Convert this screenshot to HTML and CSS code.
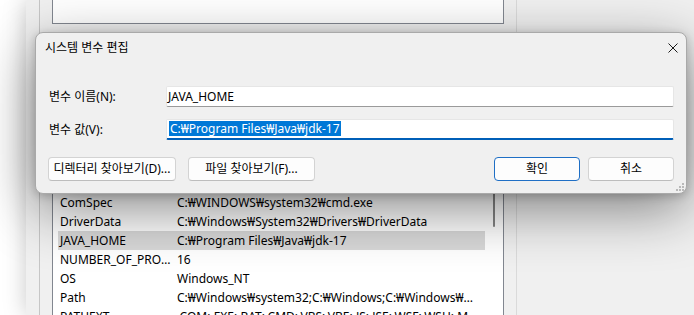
FILE: index.html
```html
<!DOCTYPE html>
<html lang="ko">
<head>
  <meta charset="UTF-8" />
  <meta name="viewport" content="width=device-width, initial-scale=1.0"/>
  <title>시스템 변수 편집</title>
  <link rel="stylesheet" href="styles.css">
</head>
<body>
  <!-- 뒤쪽 환경 변수 창 -->
  <div class="desk">
    <div class="pane">
      <div class="list list-user"></div>
      <div class="list list-sys">
        <div class="rows">
          <div class="row head"></div>
          <div class="row"><span class="c1">ComSpec</span><span class="c2">C:₩WINDOWS₩system32₩cmd.exe</span></div>
          <div class="row"><span class="c1">DriverData</span><span class="c2">C:₩Windows₩System32₩Drivers₩DriverData</span></div>
          <div class="row selected"><span class="c1">JAVA_HOME</span><span class="c2">C:₩Program Files₩Java₩jdk-17</span></div>
          <div class="row"><span class="c1">NUMBER_OF_PROCESSORS</span><span class="c2">16</span></div>
          <div class="row"><span class="c1">OS</span><span class="c2">Windows_NT</span></div>
          <div class="row"><span class="c1">Path</span><span class="c2">C:₩Windows₩system32;C:₩Windows;C:₩Windows₩System32₩Wbem;C:₩Windows₩System32₩WindowsPowerShell₩v1.0₩</span></div>
          <div class="row"><span class="c1">PATHEXT</span><span class="c2">.COM;.EXE;.BAT;.CMD;.VBS;.VBE;.JS;.JSE;.WSF;.WSH;.MSC</span></div>
        </div>
        <div class="scroll"><div class="thumb"></div></div>
      </div>
    </div>
  </div>

  <!-- 시스템 변수 편집 대화상자 -->
  <div class="dialog">
    <div class="titlebar">
      <span class="title">시스템 변수 편집</span>
      <svg class="close" width="10" height="10" viewBox="0 0 10 10">
        <path d="M0.5 0.5 L9.5 9.5 M9.5 0.5 L0.5 9.5" stroke="#1b1b1b" stroke-width="1" fill="none"/>
      </svg>
    </div>
    <div class="body">
      <div class="field">
        <label>변수 이름(N):</label>
        <div class="input">JAVA_HOME</div>
      </div>
      <div class="field">
        <label>변수 값(V):</label>
        <div class="input focus"><span class="sel">C:₩Program Files₩Java₩jdk-17</span></div>
      </div>
      <div class="buttons">
        <div class="group">
          <button class="wide">디렉터리 찾아보기(D)...</button>
          <button class="wide2">파일 찾아보기(F)...</button>
        </div>
        <div class="group right">
          <button class="small default">확인</button>
          <button class="small">취소</button>
        </div>
      </div>
    </div>
    <svg class="grip" width="10" height="10" viewBox="0 0 10 10" fill="#b9b9b9">
      <rect x="7" y="1" width="2" height="2"/>
      <rect x="4" y="4" width="2" height="2"/><rect x="7" y="4" width="2" height="2"/>
      <rect x="1" y="7" width="2" height="2"/><rect x="4" y="7" width="2" height="2"/><rect x="7" y="7" width="2" height="2"/>
    </svg>
  </div>
</body>
</html>
```

FILE: styles.css
```css
body {
  margin: 0;
  width: 694px;
  height: 315px;
  overflow: hidden;
  position: relative;
  background: #fff;
  font: 12px/1 "Noto Sans", "Noto Sans CJK KR", sans-serif;
  color: #000;
}

/* parent window */
.desk { margin-left: 26px; height: 315px; overflow: hidden; padding-left: 13px; background: #f0f0f0; box-shadow: 0 0 22px rgba(0,0,0,.22); }
.pane { width: 452px; height: 315px; padding: 0 12px; border-left: 1px solid #c6c6c6; border-right: 1px solid #dadada; }

.list { width: 452px; box-sizing: border-box; background: #fff; border: 1px solid #828790; }
.list-user { height: 24px; border-top: none; }
.list-sys { margin-top: 144px; height: 200px; display: flex; }

.rows { flex: 1; padding: 0 4px 0 5px; min-width: 0; }
.row { display: flex; height: 19px; line-height: 19px; white-space: nowrap; }
.row.head { height: 24px; }
.row.selected { background: #d9d9d9; }
.row span { overflow: hidden; text-overflow: ellipsis; }
.c1 { width: 117px; flex: none; box-sizing: border-box; padding: 0 3px 0 2px; }
.c2 { flex: 1; padding: 0 6px 0 2px; }

.scroll { width: 14px; flex: none; }
.thumb { width: 2px; height: 56px; margin: 2px 0 0 4px; background: #858585; border-radius: 1px; }

/* dialog */
.dialog {
  position: absolute;
  left: 35px;
  top: 32px;
  width: 652px;
  height: 162px;
  box-sizing: border-box;
  background: #f0f0f0;
  border: 1px solid #a9a9a9;
  border-radius: 8px;
  box-shadow: 0 16px 56px rgba(0,0,0,.46), 0 2px 10px rgba(0,0,0,.2);
}
.titlebar { height: 30px; display: flex; align-items: center; justify-content: space-between; padding: 0 8px 0 9px; }
.close { display: block; }

.body { padding: 23px 12px 12px; }
.field { display: flex; align-items: center; height: 21px; margin-bottom: 12px; }
.field + .field { margin-bottom: 17px; }
.field label { width: 118px; flex: none; padding-left: 1px; box-sizing: border-box; }

.input {
  flex: 1;
  height: 21px;
  box-sizing: border-box;
  padding-left: 1px;
  line-height: 19px;
  background: #fff;
  border: 1px solid #e6e6e6;
  border-bottom-color: #9a9a9a;
  border-radius: 2px;
  white-space: nowrap;
}
.input.focus { display: flex; align-items: flex-start; padding: 1px 0 0 2px; border-bottom: 2px solid #005fb8; }
.sel { line-height: 15px; padding: 0 1px; background: #0078d7; color: #fff; }

.buttons { display: flex; justify-content: space-between; }
.group { display: flex; gap: 12px; }
.group.right { gap: 8px; }
button {
  height: 24px;
  padding: 0;
  font: inherit;
  color: #000;
  white-space: nowrap;
  background: #fdfdfd;
  border: 1px solid #d3d3d3;
  border-bottom-color: #bdbdbd;
  border-radius: 4px;
}
.wide { width: 128px; }
.wide2 { width: 127px; }
.small { width: 86px; }
.default { border: 1px solid #1f6fc5; }

.grip { position: absolute; right: 1px; bottom: 1px; }
```
